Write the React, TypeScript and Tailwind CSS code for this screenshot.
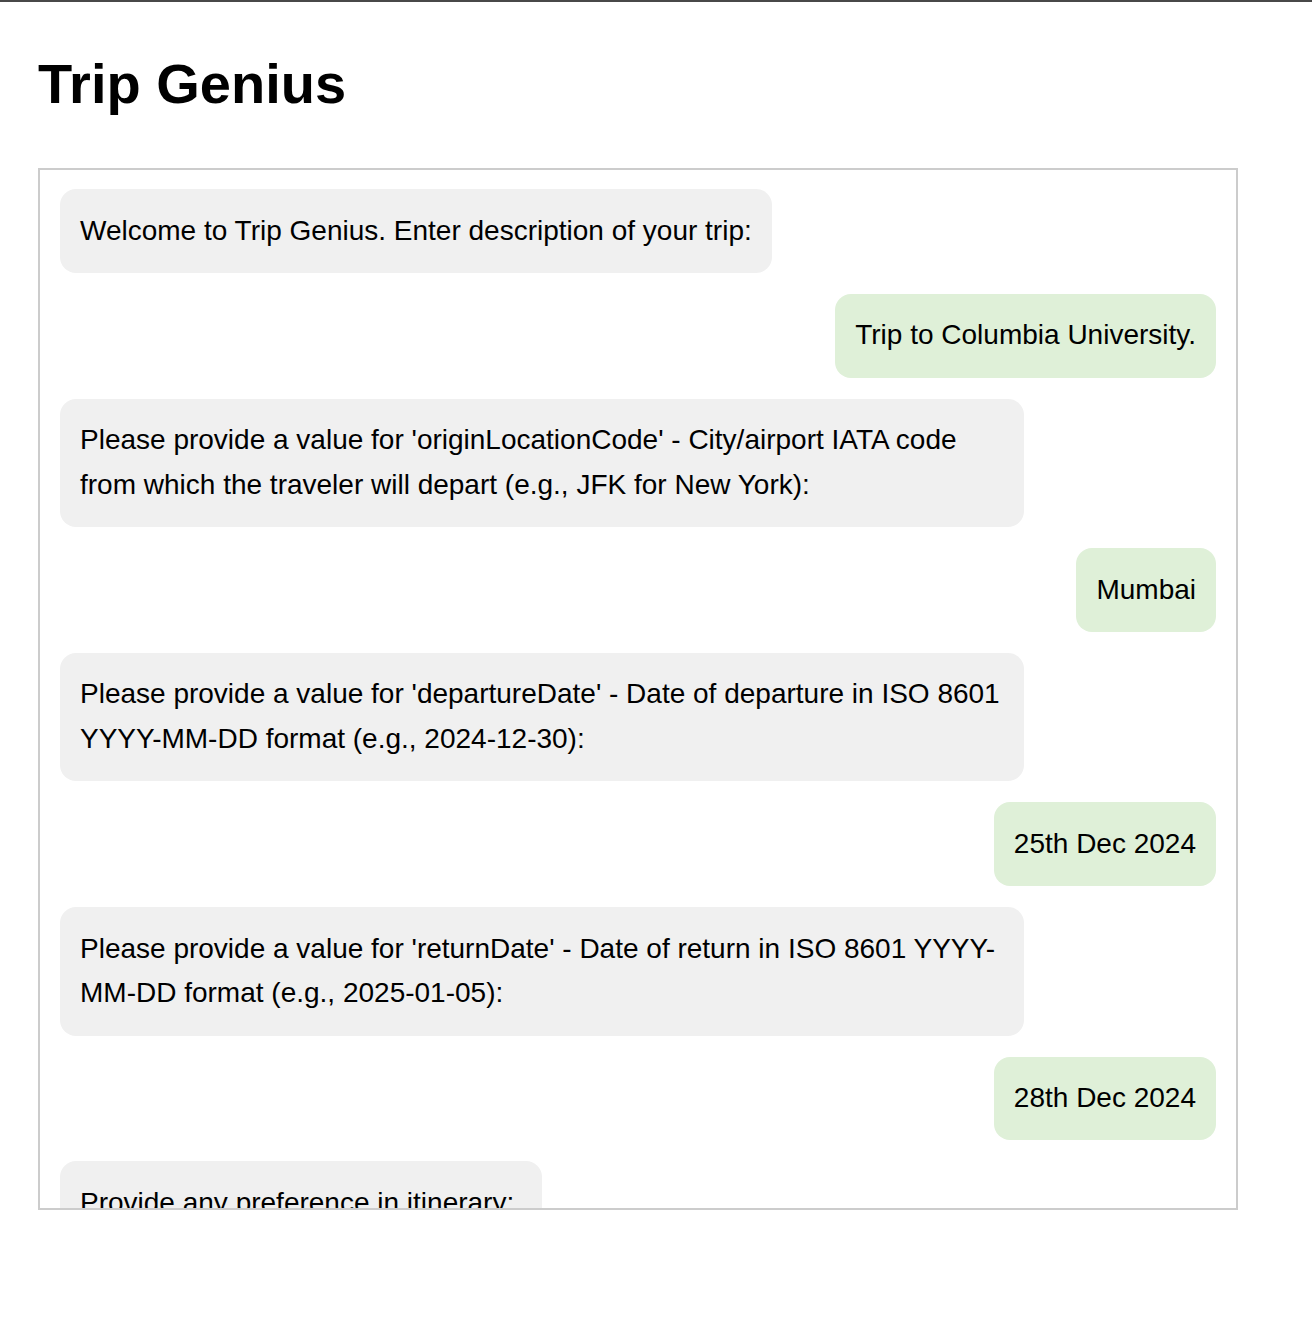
import React from 'react';

type Msg = { from: 'bot' | 'user'; text: string };

const messages: Msg[] = [
	{ from: 'bot', text: 'Welcome to Trip Genius. Enter description of your trip:' },
	{ from: 'user', text: 'Trip to Columbia University.' },
	{
		from: 'bot',
		text: "Please provide a value for 'originLocationCode' - City/airport IATA code from which the traveler will depart (e.g., JFK for New York):",
	},
	{ from: 'user', text: 'Mumbai' },
	{
		from: 'bot',
		text: "Please provide a value for 'departureDate' - Date of departure in ISO 8601 YYYY-MM-DD format (e.g., 2024-12-30):",
	},
	{ from: 'user', text: '25th Dec 2024' },
	{
		from: 'bot',
		text: "Please provide a value for 'returnDate' - Date of return in ISO 8601 YYYY-MM-DD format (e.g., 2025-01-05):",
	},
	{ from: 'user', text: '28th Dec 2024' },
	{ from: 'bot', text: 'Provide any preference in itinerary:\u00a0' },
];

const App: React.FC = () => {
	return (
		<div
			className="min-h-[1338px] bg-white text-black border-t-2 border-[#484848]"
			style={{ fontFamily: '"Liberation Sans", Arial, Helvetica, sans-serif' }}
		>
			<div className="px-[38px]">
				<h1 className="pt-[48px] text-[56px] leading-[67px] font-bold">Trip Genius</h1>

				{/* chat window */}
				<div className="mt-[51px] w-[1200px] h-[1042px] border-2 border-[#cccccc] overflow-hidden px-[20px] pt-[19px]">
					<div className="flex flex-col gap-[21px]">
						{messages.map((m, i) => (
							<div
								key={i}
								className={
									m.from === 'user'
										? 'self-end max-w-[964px] rounded-[16px] bg-[#dff0d8] px-[20px] py-[19.5px] text-[28px] leading-[44.75px]'
										: 'self-start max-w-[964px] rounded-[16px] bg-[#f0f0f0] px-[20px] py-[19.5px] text-[28px] leading-[44.75px]'
								}
							>
								{m.text}
							</div>
						))}
					</div>
				</div>
			</div>
		</div>
	);
};

export default App;
